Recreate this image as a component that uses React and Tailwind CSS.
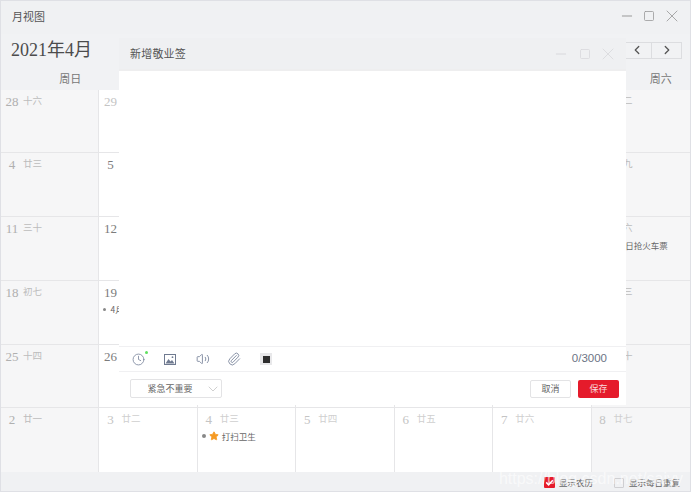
import { ChevronDown, ChevronLeft, ChevronRight, Clock, Minus, Paperclip, Square, Star, Volume2, X } from 'lucide-react';

const uiFont = "font-['Noto_Sans_CJK_SC','Noto_Sans',sans-serif]";
const numFont = "font-['Liberation_Serif','Noto_Sans_CJK_SC',serif]";

const weekdays = ['周日', '周一', '周二', '周三', '周四', '周五', '周六'];

const weeks = [
  { h: 'h-[63px]', days: [['28', '十六'], ['29', '十七'], ['30', '十八'], ['31', '十九'], ['1', '二十'], ['2', '廿一'], ['3', '廿二']], faded: [1, 2, 3] },
  { h: 'h-[64px]', days: [['4', '廿三'], ['5', '廿四'], ['6', '廿五'], ['7', '廿六'], ['8', '廿七'], ['9', '廿八'], ['10', '廿九']] },
  { h: 'h-[64px]', days: [['11', '三十'], ['12', '三月'], ['13', '初二'], ['14', '初三'], ['15', '初四'], ['16', '初五'], ['17', '初六']], events: { 6: '4月17日抢火车票' } },
  { h: 'h-[64px]', days: [['18', '初七'], ['19', '初八'], ['20', '初九'], ['21', '初十'], ['22', '十一'], ['23', '十二'], ['24', '十三']], events: { 1: '4月19日值班' } },
  { h: 'h-[63px]', days: [['25', '十四'], ['26', '十五'], ['27', '十六'], ['28', '十七'], ['29', '十八'], ['30', '十九'], ['1', '二十']] },
  { h: 'h-[64px]', days: [['2', '廿一'], ['3', '廿二'], ['4', '廿三'], ['5', '廿四'], ['6', '廿五'], ['7', '廿六'], ['8', '廿七']], faded: [1, 2, 3, 4, 5, 6], starred: { 2: '打扫卫生' } },
];

function DayCell({ num, lunar, weekend, faded, event, starred, last }) {
  const numColor = faded ? 'text-[#c4c4c4]' : weekend ? 'text-[#b0b0b0]' : 'text-[#7c7c7c]';
  return (
    <div className={`min-w-0 overflow-hidden border-[#e6e6e8] ${last ? '' : 'border-r'} ${weekend ? 'bg-[#f6f6f7]' : 'bg-white'}`}>
      <div className="flex items-center h-[22px] pl-[4px]">
        <span className={`${numFont} w-[14px] text-center text-[13px] leading-none shrink-0 ${numColor}`}>{num}</span>
        <span className={`${uiFont} ml-[4px] text-[9.5px] leading-none ${faded ? 'text-[#cfcfcf]' : 'text-[#bcbcbc]'}`}>{lunar}</span>
      </div>
      {event && (
        <div className={`${uiFont} flex items-center mt-[2px] pl-[4px] text-[8.5px] leading-none text-[#666] whitespace-nowrap`}>
          <span className="w-[3px] h-[3px] rounded-full bg-[#888] mr-[4px]" />
          {event}
        </div>
      )}
      {starred && (
        <div className={`${uiFont} flex items-center mt-[1px] pl-[4px] text-[8.5px] leading-none text-[#666] whitespace-nowrap`}>
          <span className="w-[4px] h-[4px] rounded-full bg-[#888] mr-[3px]" />
          <Star className="w-[10px] h-[10px] mr-[3px] text-[#f59a23] fill-[#f59a23]" />
          {starred}
        </div>
      )}
    </div>
  );
}

function WindowControls({ tone, squareGap }) {
  return (
    <div className={`flex items-center ${tone}`}>
      <Minus className={`w-[16px] h-[16px] ${squareGap}`} strokeWidth={1.5} />
      <Square className="w-[12px] h-[12px] mr-[7px]" strokeWidth={1.6} />
      <X className="w-[20px] h-[20px]" strokeWidth={1} />
    </div>
  );
}

function ImageGlyph() {
  return (
    <svg width="12" height="11" viewBox="0 0 12 11" className="text-[#6f7a90]">
      <rect x="0.5" y="0.5" width="11" height="10" fill="none" stroke="currentColor" />
      <path d="M1.5 9.5 L4.5 5 L6.5 7.5 L8 6 L10.5 9.5 Z" fill="currentColor" />
      <circle cx="8.5" cy="3.2" r="0.9" fill="currentColor" />
    </svg>
  );
}

function CheckedBox() {
  return (
    <svg width="11" height="11" viewBox="0 0 11 11" className="mr-[4px]">
      <rect width="11" height="11" rx="1" fill="#e51b2b" />
      <path d="M2.2 5.4 L4.6 7.8 L8.8 3.2" fill="none" stroke="#fff" strokeWidth="1.5" />
    </svg>
  );
}

function NoteDialog() {
  return (
    <div className="absolute left-[119px] top-[38px] w-[507px] h-[367px] flex flex-col bg-white">
      <div className="h-[33px] shrink-0 flex items-center justify-between pl-[11px] pr-[8px] bg-[#eff0f2] border-b-2 border-[#eeeeef]">
        <span className={`${uiFont} text-[11px] tracking-[0.2px] text-[#555]`}>新增敬业签</span>
        <WindowControls tone="text-[#d8d8dc]" squareGap="mr-[10px]" />
      </div>
      <div className="flex-1" />
      <div className="h-[26px] shrink-0 flex items-center justify-between pl-[13px] pr-[19px] border-t border-b border-[#f0f0f2]">
        <div className="flex items-center text-[#78839a]">
          <span className="relative mr-[19px]">
            <Clock className="w-[13px] h-[13px]" strokeWidth={1.5} />
            <span className="absolute -top-[2px] -right-[3px] w-[3px] h-[3px] rounded-full bg-[#5fe05f]" />
          </span>
          <span className="mr-[20px]"><ImageGlyph /></span>
          <Volume2 className="w-[14px] h-[14px] mr-[17px]" strokeWidth={1.5} />
          <Paperclip className="w-[14px] h-[14px] mr-[19px]" strokeWidth={1.5} />
          <span className="w-[12px] h-[12px] flex items-center justify-center bg-[#e8e8ea]">
            <span className="w-[7px] h-[7px] bg-[#2e2e2e]" />
          </span>
        </div>
        <span className="text-[11.5px] text-[#6d7485] font-['Liberation_Sans',sans-serif]">0/3000</span>
      </div>
      <div className="h-[33px] shrink-0 flex items-center justify-between pl-[11px] pr-[7px]">
        <div className={`${uiFont} w-[92px] h-[19px] flex items-center border border-[#e3e3e5] rounded-[2px] text-[9px] text-[#666]`}>
          <span className="flex-1 text-center pl-[4px]">紧急不重要</span>
          <ChevronDown className="w-[16px] h-[16px] text-[#c4c4c4]" strokeWidth={1.2} />
        </div>
        <div className={`${uiFont} flex gap-[7px] text-[9px]`}>
          <button className="w-[41px] h-[18px] border border-[#e3e3e5] rounded-[2px] text-[#666] bg-white">取消</button>
          <button className="w-[41px] h-[18px] rounded-[2px] text-[#f8d9dc] bg-[#e51b2b]">保存</button>
        </div>
      </div>
    </div>
  );
}

export default function App() {
  return (
    <div className="relative w-[691px] h-[495px] overflow-hidden bg-white">
      <div className="h-[492px] flex flex-col bg-[#f0f1f3] border-l border-r border-t border-b border-[#dfe0e5]">
        <div className="h-[33px] shrink-0 flex items-center justify-between pl-[11px] pr-[8px] pb-[3px]">
          <span className={`${uiFont} text-[11px] text-[#555]`}>月视图</span>
          <WindowControls tone="text-[#999]" squareGap="mr-[8px]" />
        </div>

        <div className="h-[36px] shrink-0 flex items-center justify-between pl-[10px] pr-[8px] pb-[4px] bg-[#f1f2f4]">
          <span className={`${numFont} text-[18px] leading-none text-[#4c4c4c]`}>2021年4月</span>
          <div className="w-[61px] h-[17px] flex border border-[#dcdde0] text-[#555]">
            <span className="flex-1 flex items-center justify-center border-r border-[#dcdde0]">
              <ChevronLeft className="w-[14px] h-[14px]" strokeWidth={2.2} />
            </span>
            <span className="flex-1 flex items-center justify-center">
              <ChevronRight className="w-[14px] h-[14px]" strokeWidth={2.2} />
            </span>
          </div>
        </div>

        <div className="h-[20px] shrink-0 grid grid-cols-7 items-center pb-[5px] bg-[#f1f2f4]">
          {weekdays.map((d) => (
            <span key={d} className={`${uiFont} pl-[40px] text-center text-[11px] text-[#777]`}>{d}</span>
          ))}
        </div>

        {weeks.map((week, i) => (
          <div key={i} className={`${week.h} shrink-0 grid grid-cols-7 ${i < weeks.length - 1 ? 'border-b border-[#e6e6e8]' : ''}`}>
            {week.days.map(([num, lunar], j) => (
              <DayCell
                key={j}
                num={num}
                lunar={lunar}
                weekend={j === 0 || j === 6}
                faded={week.faded?.includes(j)}
                event={week.events?.[j]}
                starred={week.starred?.[j]}
                last={j === 6}
              />
            ))}
          </div>
        ))}

        <div className={`${uiFont} flex-1 flex items-center justify-end pt-[2px] pr-[10px] text-[8.5px] text-[#666]`}>
          <CheckedBox />
          <span className="mr-[21px]">显示农历</span>
          <span className="w-[10px] h-[10px] mr-[5px] border border-[#cfcfd2] rounded-[1px]" />
          <span>显示每日重复</span>
        </div>
      </div>

      <NoteDialog />

      <span className="absolute right-[8px] bottom-[8px] text-[16px] leading-none text-white/60 font-['Liberation_Sans',sans-serif]">
        https://blog.csdn.net/saiyy
      </span>
    </div>
  );
}
